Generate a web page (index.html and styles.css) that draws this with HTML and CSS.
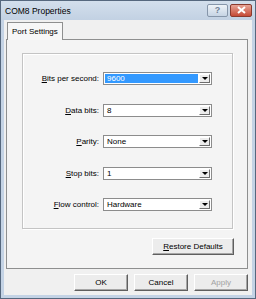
FILE: index.html
```html
<!DOCTYPE html>
<html lang="en">
<head>
    <meta charset="UTF-8">
    <title>COM8 Properties</title>
    <link rel="stylesheet" href="styles.css">
</head>
<body>
    <div class="window">
        <div class="titlebar">
            <span class="title">COM8 Properties</span>
            <div class="caption-buttons">
                <span class="cap-btn help">?</span>
                <span class="cap-btn close">
                    <svg width="9" height="8" viewBox="0 0 9 8"><path d="M1 1 L8 7 M8 1 L1 7" stroke="#fff" stroke-width="2"/></svg>
                </span>
            </div>
        </div>
        <div class="client">
            <div class="tabs">
                <div class="tab">Port Settings</div>
            </div>
            <div class="panel">
                <div class="group">
                    <label class="lbl"><u>B</u>its per second:</label>
                    <div class="combo"><span class="value selected">9600</span><span class="drop"></span></div>

                    <label class="lbl"><u>D</u>ata bits:</label>
                    <div class="combo"><span class="value">8</span><span class="drop"></span></div>

                    <label class="lbl"><u>P</u>arity:</label>
                    <div class="combo"><span class="value">None</span><span class="drop"></span></div>

                    <label class="lbl"><u>S</u>top bits:</label>
                    <div class="combo"><span class="value">1</span><span class="drop"></span></div>

                    <label class="lbl"><u>F</u>low control:</label>
                    <div class="combo"><span class="value">Hardware</span><span class="drop"></span></div>
                </div>
                <div class="restore-row">
                    <button class="btn restore"><u>R</u>estore Defaults</button>
                </div>
            </div>
            <div class="footer">
                <button class="btn">OK</button>
                <button class="btn">Cancel</button>
                <button class="btn disabled">Apply</button>
            </div>
        </div>
    </div>
</body>
</html>
```

FILE: styles.css
```css
body {
    margin: 0;
    font-family: "Liberation Sans", Arial, sans-serif;
    font-size: 8px;
    color: #000;
    background: #fff;
}

.window {
    width: 256px;
    height: 299px;
    box-sizing: border-box;
    border: 1px solid #56687e;
    background: #c4d3e5;
    padding: 0 3px 3px 3px;
    display: flex;
    flex-direction: column;
}

.titlebar {
    height: 19px;
    display: flex;
    align-items: center;
    justify-content: space-between;
    background: linear-gradient(#d3dfec, #c2d1e3);
    margin: 0 -3px;
    padding: 0 3px 0 4px;
}

.title {
    font-size: 8.5px;
    margin-top: 1px;
}

.caption-buttons {
    display: flex;
    gap: 2px;
    margin-top: -1px;
}

.cap-btn {
    width: 21px;
    height: 13px;
    box-sizing: border-box;
    border: 1px solid #8696aa;
    border-radius: 2px;
    display: flex;
    align-items: center;
    justify-content: center;
}

.cap-btn.help {
    background: linear-gradient(#eef3f8, #c6d4e4);
    color: #6f7f95;
    font-weight: bold;
    font-size: 9px;
}

.cap-btn.close {
    width: 22px;
    background: linear-gradient(#e8a496, #c54a36);
    border-color: #8a3a2e;
}

.client {
    flex: 1;
    background: #f0f0f0;
    display: flex;
    flex-direction: column;
    padding: 0 4px 0 2px;
}

.tabs {
    display: flex;
    padding: 2px 0 0 1px;
    height: 17px;
    position: relative;
    z-index: 1;
}

.tab {
    width: 56px;
    box-sizing: border-box;
    border: 1px solid #8e8f8f;
    border-bottom: none;
    background: #f7f7f7;
    height: 18px;
    padding: 4px 0 0 4px;
}

.panel {
    height: 230px;
    box-sizing: border-box;
    border: 1px solid #8e8f8f;
    background: #f4f4f4;
    padding: 13px 14px 0 15px;
    display: flex;
    flex-direction: column;
}

.group {
    height: 176px;
    box-sizing: border-box;
    border: 1px solid #c4c4c4;
    box-shadow: inset 1px 1px 0 #fff, 1px 1px 0 #fff;
    display: grid;
    grid-template-columns: 76px 109px;
    grid-auto-rows: 13px;
    column-gap: 4px;
    row-gap: 18.5px;
    padding-top: 18px;
    align-content: start;
}

.lbl {
    text-align: right;
    line-height: 13px;
}

.combo {
    display: flex;
    box-sizing: border-box;
    border: 1px solid #8c8c8c;
    background: #fff;
    padding: 1px;
}

.value {
    flex: 1;
    padding-left: 2px;
    line-height: 9px;
    margin-right: 1px;
}

.value.selected {
    background: #3399ff;
    color: #fff;
}

.drop {
    width: 11px;
    box-sizing: border-box;
    background: #ececec;
    border: 1px solid;
    border-color: #fff #6d6d6d #6d6d6d #fff;
    display: flex;
    align-items: center;
    justify-content: center;
}

.drop::after {
    content: "";
    border-left: 3px solid transparent;
    border-right: 3px solid transparent;
    border-top: 3px solid #000;
}

.restore-row {
    display: flex;
    justify-content: flex-end;
    margin-top: 9px;
}

.btn {
    font-family: "Liberation Sans", Arial, sans-serif;
    font-size: 8px;
    color: #000;
    width: 54px;
    height: 17px;
    padding: 0;
    box-sizing: border-box;
    background: #ececec;
    border: 1px solid;
    border-color: #fff #5f5f5f #5f5f5f #fff;
    box-shadow: inset -1px -1px 0 #a6a6a6;
}

.btn.restore {
    width: 82px;
    margin-right: -1px;
}

.btn.disabled {
    color: #a2a2a2;
}

.footer {
    display: flex;
    justify-content: flex-end;
    gap: 6px;
    padding: 5px 0 0 0;
}
```
